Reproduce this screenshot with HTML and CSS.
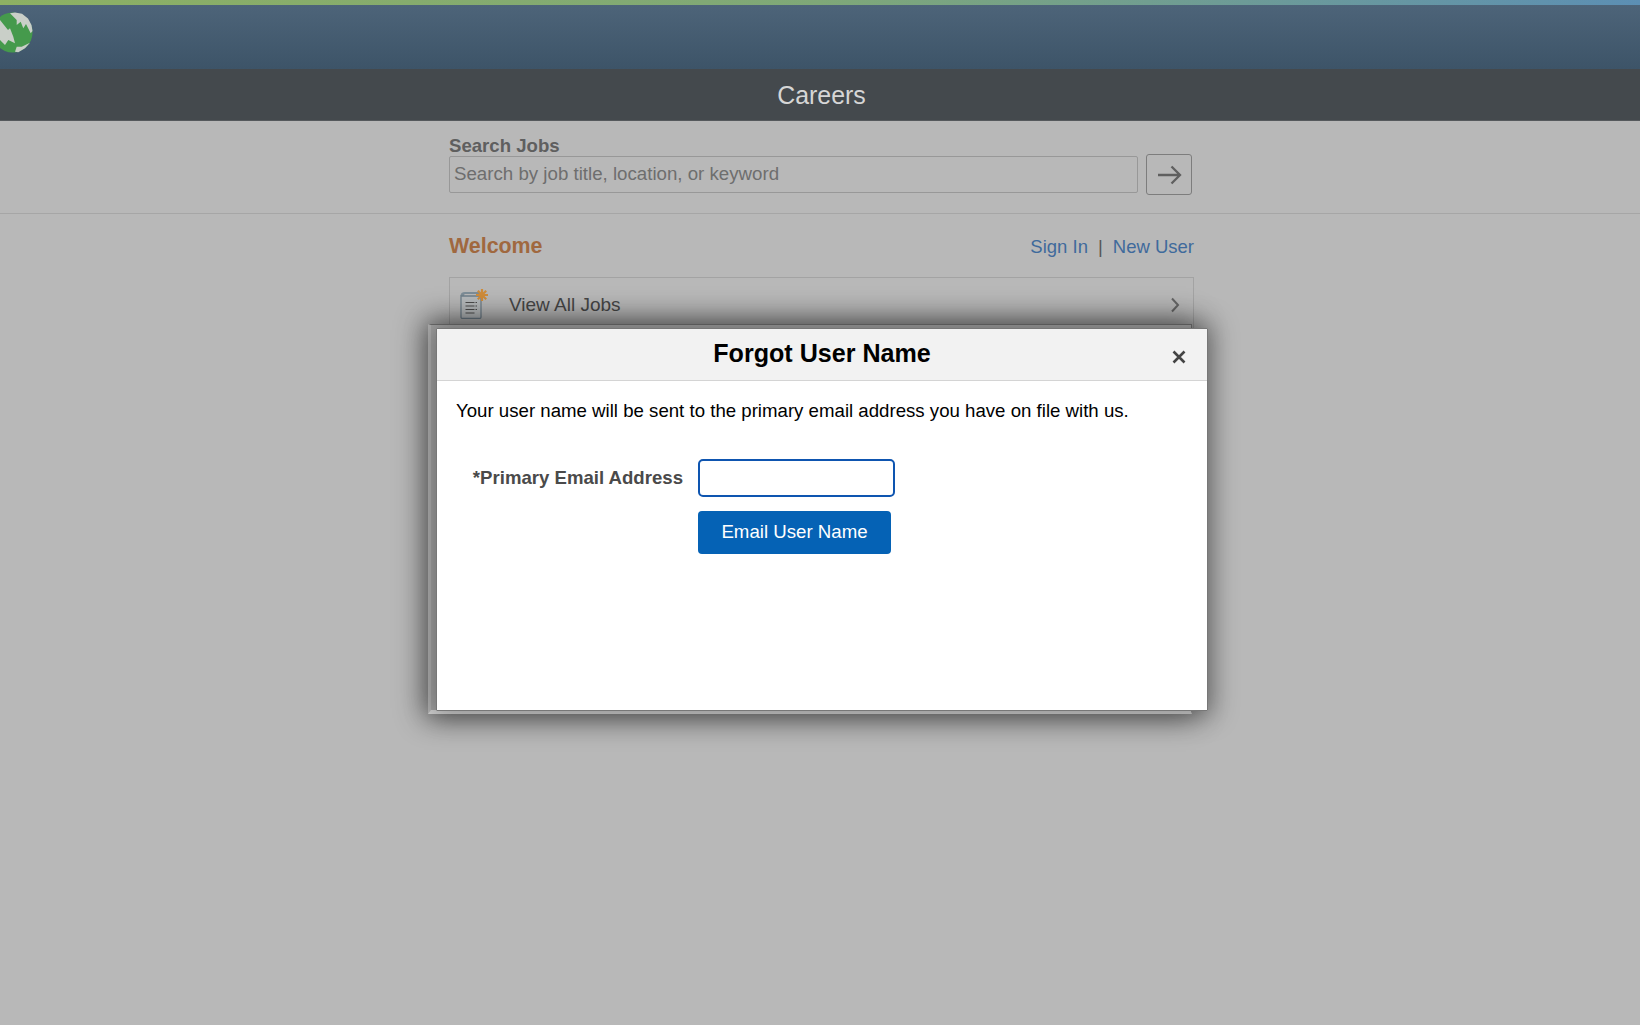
FILE: index.html
```html
<!DOCTYPE html>
<html lang="en">
<head>
<meta charset="utf-8">
<title>Careers</title>
<link rel="stylesheet" href="styles.css">
</head>
<body>
<div class="stripe"></div>
<header class="banner">
  <svg class="logo" width="33" height="41" viewBox="0 0 33 41">
    <circle cx="12.500" cy="20.500" r="20" fill="#459a4c"/>
    <path d="M10 1.300 L16.700 8 L16.700 13 L20.700 9.700 L23.300 16.300 L26 12 L30.700 21.300 L32.500 19 L31.500 13 L28 6.500 L22 1.800 L15 0.500 Z" fill="#c9cfc8"/>
    <path d="M0 8 L4 13 L8 18 L10 16.300 L13.300 24.700 L15 31.300 L8.300 28 L5 33 L0 28 Z" fill="#c9cfc8"/>
    <path d="M15 39.700 L16.700 34.700 L21.700 34.700 L30 30.700 L25 36.300 L18.300 40.300 Z" fill="#c9cfc8"/>
  </svg>
</header>
<div class="titlebar">Careers</div>
<section class="search">
  <div class="search-inner">
    <label class="search-label" for="q">Search Jobs</label>
    <div class="search-row">
      <input class="search-input" id="q" placeholder="Search by job title, location, or keyword">
      <button class="go" aria-label="Search">
        <svg width="25" height="20" viewBox="0 0 25 20" fill="none" stroke="#5f5f5f" stroke-width="2.300"><path d="M1 10H23M14.500 1.500L23 10L14.500 18.500"/></svg>
      </button>
    </div>
  </div>
</section>
<main class="content">
  <div class="welcome-row">
    <h1 class="welcome">Welcome</h1>
    <div class="links"><a>Sign In</a><span class="sep">|</span><a>New User</a></div>
  </div>
  <div class="job-row">
    <svg class="job-icon" width="30" height="32" viewBox="0 0 30 32">
      <path d="M1.500 9 Q1.500 5 6 5 H21 V7 H6 Q5 7 5 9 Z" fill="#7d8d97"/>
      <path d="M2 9 H22 V30 Q22 31.500 20.500 31.500 H3.500 Q2 31.500 2 30 Z" fill="#b6babc" stroke="#70808b" stroke-width="1.300"/>
      <path d="M6.500 15.500H18M6.500 19H18M6.500 22.500H18M6.500 26H16" stroke="#4d4d4d" stroke-width="1.100" stroke-dasharray="9 1 2 0"/>
      <path d="M23 2V14M17 8H29M18.800 3.800L27.200 12.200M27.200 3.800L18.800 12.200" stroke="#cf8c3a" stroke-width="2.200"/>
    </svg>
    <span class="job-text">View All Jobs</span>
    <svg class="chev" width="10" height="16" viewBox="0 0 10 16" fill="none" stroke="#666" stroke-width="2"><path d="M2 1.500L8 8L2 14.500"/></svg>
  </div>
  <div class="job-row job-row-blank"></div>
</main>

<div class="back-modal"></div>
<section class="modal" role="dialog" aria-label="Forgot User Name">
  <header class="modal-head">
    <h2 class="modal-title">Forgot User Name</h2>
    <svg class="close" width="14" height="14" viewBox="0 0 14 14" stroke="#444" stroke-width="2.600" fill="none"><path d="M1.500 1.500L12.500 12.500M12.500 1.500L1.500 12.500"/></svg>
  </header>
  <div class="modal-body">
    <p class="note">Your user name will be sent to the primary email address you have on file with us.</p>
    <div class="form-grid">
      <label class="email-label" for="mail">*Primary Email Address</label>
      <input class="email-input" id="mail">
      <button class="submit">Email User Name</button>
    </div>
  </div>
</section>
</body>
</html>
```
FILE: styles.css
```css
* { box-sizing: border-box; }
html, body { height: 100%; }
body {
  margin: 0;
  height: 1025px;
  overflow: hidden;
  background: #b8b8b8;
  font-family: "Liberation Sans", Arial, sans-serif;
  color: #444;
  position: relative;
}
.stripe { height: 5px; background: linear-gradient(90deg, #8db063 0%, #7fa878 50%, #5c8fb4 100%); }
.banner { height: 64px; background: linear-gradient(180deg, #4d6479 0%, #3d5468 100%); overflow: hidden; }
.logo { display: block; margin-top: 7px; }
.titlebar {
  height: 52px;
  padding-left: 3px;
  background: #44494d;
  border-bottom: 1px solid #55595c;
  color: #d6d6d6;
  font-size: 24.900px;
  line-height: 53px;
  text-align: center;
}
.search { height: 93px; border-bottom: 1px solid #a6a6a6; }
.search-inner { width: 745px; margin-left: 449px; padding-top: 15px; }
.search-label { display: block; font-size: 18.600px; font-weight: 700; line-height: 20px; color: #5f5f5f; }
.search-row { display: flex; align-items: center; gap: 8px; margin-top: -2px; }
.search-input {
  width: 689px;
  height: 37px;
  margin-bottom: 1px;
  padding: 0 4px;
  background: #b8b8b8;
  border: 1px solid #989898;
  border-radius: 2px;
  font: 18.700px "Liberation Sans", Arial, sans-serif;
  color: #666;
}
.search-input::placeholder { color: #6e6e6e; opacity: 1; }
.go {
  width: 46px;
  height: 41px;
  padding: 0;
  display: flex;
  align-items: center;
  justify-content: center;
  background: #b8b8b8;
  border: 1px solid #7d7d7d;
  border-radius: 3px;
}
.content { width: 745px; margin-left: 449px; padding-top: 18px; }
.welcome-row { display: flex; justify-content: space-between; align-items: center; height: 28px; }
.welcome { margin: 0; font-size: 21.400px; font-weight: 700; color: #a0683f; }
.links { display: flex; align-items: center; font-size: 18.500px; color: #3f6a9c; margin: 2px 0 0 0; }
.sep { margin: 0 10px; color: #555; }
.job-row {
  display: flex;
  align-items: center;
  height: 54px;
  border: 1px solid #a3a3a3;
  padding: 0 14px 0 9px;
}
.welcome-row + .job-row { margin-top: 17px; }
.job-row-blank { height: 44px; border-top: 0; }
.job-icon { flex: none; margin-top: -2px; }
.job-text { margin-left: 20px; flex: 1; font-size: 19px; color: #464646; padding-top: 2px; }
.chev { margin-right: -1px; margin-top: 2px; }
.back-modal {
  position: absolute;
  left: 428px;
  top: 324px;
  width: 764px;
  height: 390px;
  background: #a7a7a7;
  border: 1px solid #6e6e6e;
  border-bottom: 4px solid #d6d6d6;
  border-left: 3px solid #b4b4b4;
  box-shadow: 0 0 28px 4px rgba(0, 0, 0, .45);
}
.modal {
  position: absolute;
  left: 436px;
  top: 328px;
  width: 772px;
  height: 383px;
  background: #fff;
  border: 1px solid #777;
  border-radius: 1px;
  box-shadow: 0 0 26px 5px rgba(0, 0, 0, .36);
  color: #000;
}
.modal-head {
  position: relative;
  height: 52px;
  background: #f2f2f2;
  border-bottom: 1px solid #d4d4d4;
}
.modal-title { margin: 0; font-size: 25.100px; font-weight: 700; line-height: 49px; text-align: center; }
.close { position: absolute; right: 21px; top: 21px; }
.modal-body { padding: 19px 18px 0 19px; }
.note { margin: 0; font-size: 18.650px; line-height: 22px; }
.form-grid {
  display: grid;
  grid-template-columns: 242px 197px;
  align-items: center;
  row-gap: 14px;
  margin-top: 37px;
}
.email-label { font-size: 18.600px; font-weight: 700; color: #4a4a4a; text-align: right; padding-right: 15px; }
.email-input {
  height: 38px;
  width: 197px;
  background: #fff;
  border: 2.800px solid #0e55b0;
  border-radius: 5px;
  outline: 0;
}
.submit {
  grid-column: 2;
  width: 193px;
  height: 43px;
  padding: 0 0 2px;
  background: #0562b5;
  border: 0;
  border-radius: 4px;
  color: #fff;
  font: 18.670px "Liberation Sans", Arial, sans-serif;
}
```
